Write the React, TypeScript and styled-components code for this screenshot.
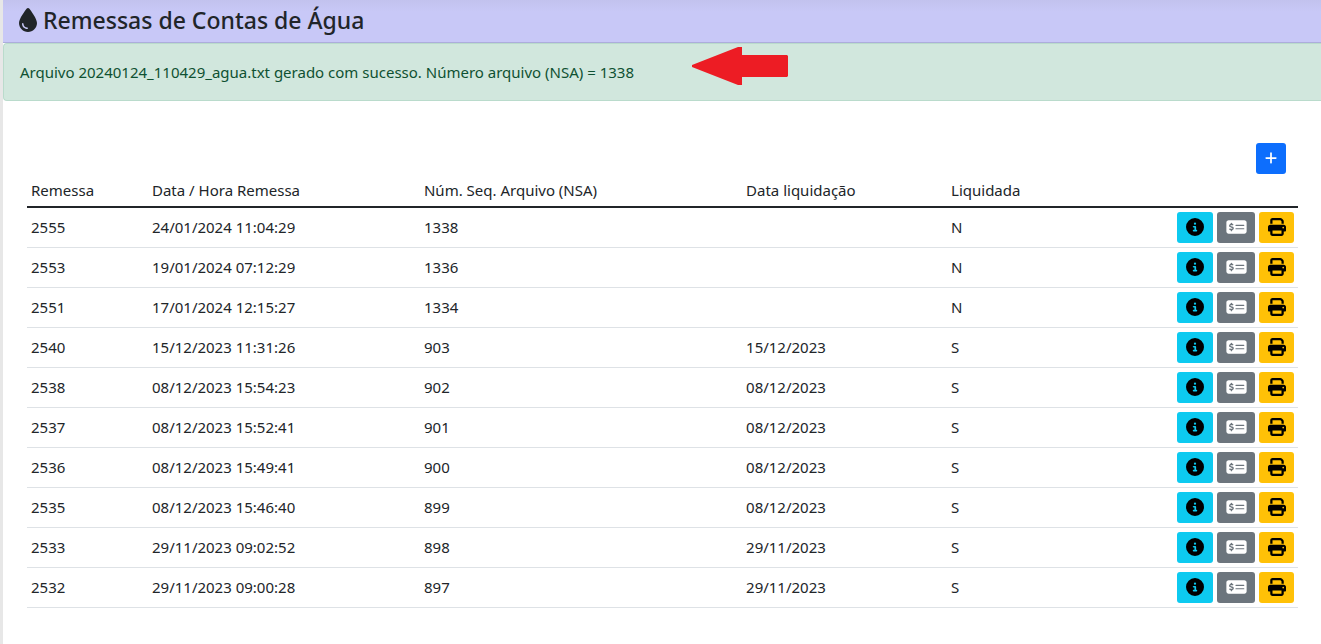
import React from 'react';
import styled, { createGlobalStyle } from 'styled-components';
import { FaCircleInfo, FaDroplet, FaMoneyCheckDollar, FaPlus, FaPrint } from 'react-icons/fa6';

const GlobalStyle = createGlobalStyle`
  *, *::before, *::after { box-sizing: border-box; }
  body {
    margin: 0;
    background: #fff;
    color: #212529;
    font-family: "Noto Sans", "Liberation Sans", sans-serif;
    font-size: 15px;
    line-height: 24px;
  }
`;

const Page = styled.div`
  min-height: 100vh;
  border-left: 3px solid #e7e7e7;
`;

const TitleBar = styled.header`
  display: flex;
  align-items: center;
  height: 43px;
  padding: 0 16px 2px;
  background: linear-gradient(#c2c2ee, #c8c8f7 12px);
  border-bottom: 1px solid #adaddb;
`;

const Title = styled.h1`
  display: flex;
  align-items: center;
  gap: 6px;
  margin: 0;
  font-size: 23px;
  line-height: 28px;
  font-weight: 500;
`;

const DropIcon = styled(FaDroplet)`
  width: 18px;
  height: 24px;
`;

const Alert = styled.div`
  position: relative;
  padding: 16px;
  color: #0f5132;
  background: #d1e7dd;
  border: 1px solid #badbcc;
  border-right: 0;
  border-radius: 4px 0 0 4px;
`;

const Arrow = styled.svg`
  position: absolute;
  left: 688px;
  top: 3px;
  width: 96px;
  height: 38px;
  fill: #ed1c24;
`;

const Content = styled.main`
  padding: 42px 23px 36px 24px;
`;

const Toolbar = styled.div`
  display: flex;
  justify-content: flex-end;
  padding-right: 12px;
`;

const Button = styled.button<{ $bg: string; $fg: string; $width: number }>`
  display: inline-flex;
  align-items: center;
  justify-content: center;
  flex: none;
  width: ${(p) => p.$width}px;
  height: 31px;
  padding: 0 0 1px;
  border: 0;
  border-radius: 3px;
  color: ${(p) => p.$fg};
  background: ${(p) => p.$bg};
  font-size: 18px;
  cursor: pointer;
`;

const AddIcon = styled(FaPlus)`
  width: 14px;
  height: 14px;
`;

const CheckIcon = styled(FaMoneyCheckDollar)`
  width: 21px;
  height: 18px;
`;

const Table = styled.table`
  width: 100%;
  table-layout: fixed;
  border-collapse: separate;
  border-spacing: 0;
`;

const Column = styled.col<{ $width: string }>`
  width: ${(p) => p.$width};
`;

const HeadCell = styled.th`
  padding: 4px;
  font-weight: 400;
  text-align: left;
  border-bottom: 2px solid #212529;
`;

const Cell = styled.td`
  height: 40px;
  padding: 4px 4px 6px;
  border-bottom: 1px solid #dee2e6;
`;

const ActionsCell = styled(Cell)`
  padding-bottom: 4px;
`;

const Actions = styled.div`
  display: flex;
  justify-content: flex-end;
  gap: 4px;
`;

interface Remessa {
  id: number;
  enviada: string;
  nsa: number;
  liquidacao: string;
  liquidada: 'S' | 'N';
}

const remessas: Remessa[] = [
  { id: 2555, enviada: '24/01/2024 11:04:29', nsa: 1338, liquidacao: '', liquidada: 'N' },
  { id: 2553, enviada: '19/01/2024 07:12:29', nsa: 1336, liquidacao: '', liquidada: 'N' },
  { id: 2551, enviada: '17/01/2024 12:15:27', nsa: 1334, liquidacao: '', liquidada: 'N' },
  { id: 2540, enviada: '15/12/2023 11:31:26', nsa: 903, liquidacao: '15/12/2023', liquidada: 'S' },
  { id: 2538, enviada: '08/12/2023 15:54:23', nsa: 902, liquidacao: '08/12/2023', liquidada: 'S' },
  { id: 2537, enviada: '08/12/2023 15:52:41', nsa: 901, liquidacao: '08/12/2023', liquidada: 'S' },
  { id: 2536, enviada: '08/12/2023 15:49:41', nsa: 900, liquidacao: '08/12/2023', liquidada: 'S' },
  { id: 2535, enviada: '08/12/2023 15:46:40', nsa: 899, liquidacao: '08/12/2023', liquidada: 'S' },
  { id: 2533, enviada: '29/11/2023 09:02:52', nsa: 898, liquidacao: '29/11/2023', liquidada: 'S' },
  { id: 2532, enviada: '29/11/2023 09:00:28', nsa: 897, liquidacao: '29/11/2023', liquidada: 'S' },
];

export default function App() {
  return (
    <>
      <GlobalStyle />
      <Page>
        <TitleBar>
          <Title>
            <DropIcon aria-hidden />
            Remessas de Contas de Água
          </Title>
        </TitleBar>
        <Alert role="alert">
          Arquivo 20240124_110429_agua.txt gerado com sucesso. Número arquivo (NSA) = 1338
          <Arrow viewBox="0 0 96 38" aria-hidden="true">
            <path d="M0 18 46 0h4v8h45l1 1v20l-1 1H50v8h-4L0 20z" />
          </Arrow>
        </Alert>
        <Content>
          <Toolbar>
            <Button type="button" $bg="#0d6efd" $fg="#fff" $width={30} aria-label="Nova remessa">
              <AddIcon />
            </Button>
          </Toolbar>
          <Table>
            <colgroup>
              <Column $width="9.52%" />
              <Column $width="21.4%" />
              <Column $width="25.34%" />
              <Column $width="16.13%" />
              <Column $width="12%" />
              <Column $width="15.61%" />
            </colgroup>
            <thead>
              <tr>
                <HeadCell scope="col">Remessa</HeadCell>
                <HeadCell scope="col">Data / Hora Remessa</HeadCell>
                <HeadCell scope="col">Núm. Seq. Arquivo (NSA)</HeadCell>
                <HeadCell scope="col">Data liquidação</HeadCell>
                <HeadCell scope="col">Liquidada</HeadCell>
                <HeadCell as="td" />
              </tr>
            </thead>
            <tbody>
              {remessas.map((r) => (
                <tr key={r.id}>
                  <Cell>{r.id}</Cell>
                  <Cell>{r.enviada}</Cell>
                  <Cell>{r.nsa}</Cell>
                  <Cell>{r.liquidacao}</Cell>
                  <Cell>{r.liquidada}</Cell>
                  <ActionsCell>
                    <Actions>
                      <Button type="button" $bg="#0dcaf0" $fg="#000" $width={36} aria-label="Detalhes">
                        <FaCircleInfo />
                      </Button>
                      <Button type="button" $bg="#6c757d" $fg="#fff" $width={38} aria-label="Liquidar">
                        <CheckIcon />
                      </Button>
                      <Button type="button" $bg="#ffc107" $fg="#000" $width={35} aria-label="Imprimir">
                        <FaPrint />
                      </Button>
                    </Actions>
                  </ActionsCell>
                </tr>
              ))}
            </tbody>
          </Table>
        </Content>
      </Page>
    </>
  );
}
